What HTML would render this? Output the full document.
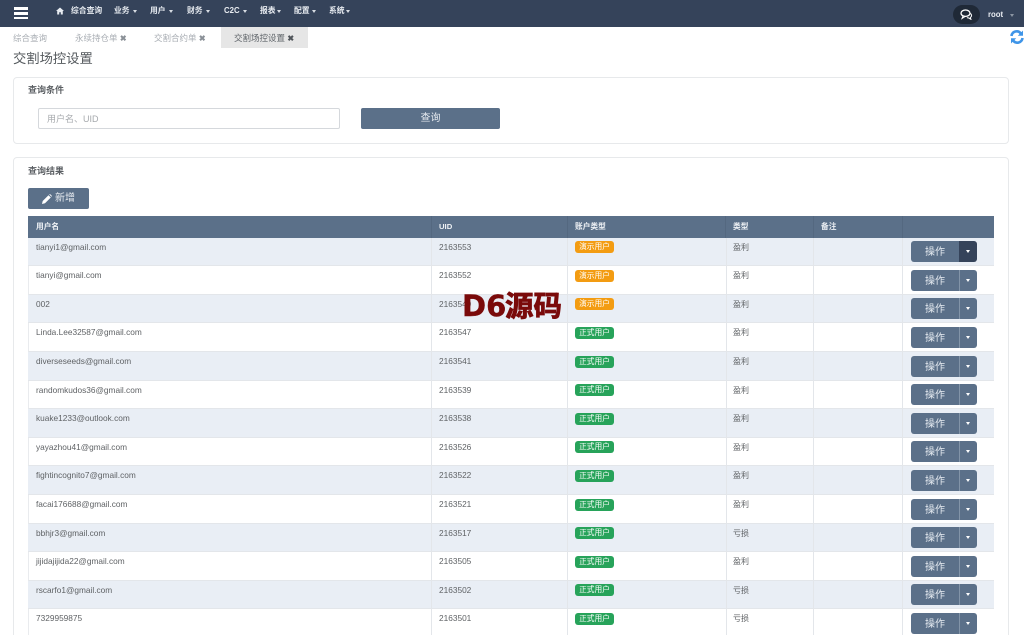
<!DOCTYPE html>
<html lang="zh"><head><meta charset="utf-8"><title>交割场控设置</title>
<style>
*{box-sizing:border-box}
html,body{margin:0;padding:0;width:1024px;height:635px;overflow:hidden;background:#fff;font-family:"Liberation Sans","Noto Sans CJK SC",sans-serif;color:#676a6c}
#p{position:relative;width:1024px;height:635px;overflow:hidden;background:#fff}
.a{position:absolute;white-space:nowrap}
.nav{left:0;top:0;width:1024px;height:27px;background:#35435a}
.n{top:5px;font-size:7.8px;line-height:12px;font-weight:bold;color:#e8ecf1}
.car{position:absolute;width:0;height:0;border-left:2.5px solid transparent;border-right:2.5px solid transparent;border-top:3px solid currentColor}
.tab{top:32px;font-size:8.5px;line-height:13px;color:#a8adb3}
.panel{position:absolute;left:13px;width:996px;background:#fff;border:1px solid #e7e9eb;border-radius:4px}
.h5{font-size:9px;font-weight:bold;color:#5b5f63;line-height:13px}
.th{position:absolute;top:216px;height:22px;font-size:7.7px;line-height:21px;font-weight:bold;color:#eef1f5;background:#5b7089;border-right:1px solid #546880;padding-left:8px}
.row{position:absolute;left:28px;width:966px;height:28.6px;border-bottom:1px solid #e3e6ea}
.row.o{background:#e9eef5}
.row.e{background:#fff;border-left:1px solid #e9ebee}
.c{position:absolute;top:0;bottom:0;border-right:1px solid #e3e6ea}
.t{position:absolute;top:3px;font-size:8.3px;line-height:13px;color:#5f6265;white-space:nowrap}
.t.z{font-size:8px}
.b{position:absolute;left:547px;top:3.5px;width:39px;height:12px;border-radius:3px;color:#fff;font-size:7.7px;line-height:12px;text-align:center}
.w{background:#f39c12}.g{background:#27a35a}
.op{position:absolute;left:883px;top:3.5px;width:48px;height:21px;background:#5b7089;border-radius:3px 0 0 3px;color:#e6ebf1;font-size:10px;line-height:23px;text-align:center}
.dd{position:absolute;left:931px;top:3.5px;width:18px;height:21px;background:#5b7089;border-left:1px solid #8294a8;border-radius:0 3px 3px 0;color:#fff}
.dd.on{background:#35435a;border-left-color:#35435a}
.dd .car{left:5.5px;top:9px}
</style></head><body><div id="p">
<div class="a nav"></div>
<div class="a" style="left:14px;top:7px;width:14px;height:3px;background:#fff"></div>
<div class="a" style="left:14px;top:12px;width:14px;height:2.5px;background:#fff"></div>
<div class="a" style="left:14px;top:16.5px;width:14px;height:2.5px;background:#fff"></div>
<svg class="a" style="left:56px;top:7px" width="8" height="8" viewBox="0 0 8 8"><path d="M4 .5 0 4h1.2v3.5h2V5.2h1.6v2.3h2V4H8z" fill="#e8ecf1"/></svg>
<div class="a n" style="left:71px">综合查询</div>
<div class="a n" style="left:114px">业务</div><span class="car a" style="left:133px;top:10px;color:#d8dde4"></span>
<div class="a n" style="left:150px">用户</div><span class="car a" style="left:169px;top:10px;color:#d8dde4"></span>
<div class="a n" style="left:187px">财务</div><span class="car a" style="left:206px;top:10px;color:#d8dde4"></span>
<div class="a n" style="left:224px">C2C</div><span class="car a" style="left:243px;top:10px;color:#d8dde4"></span>
<div class="a n" style="left:260px">报表</div><span class="car a" style="left:277px;top:10px;color:#d8dde4"></span>
<div class="a n" style="left:294px">配置</div><span class="car a" style="left:312px;top:10px;color:#d8dde4"></span>
<div class="a n" style="left:329px">系统</div><span class="car a" style="left:346px;top:10px;color:#d8dde4"></span>
<div class="a" style="left:953px;top:5px;width:27px;height:19px;border-radius:10px;background:#1f2937"></div>
<svg class="a" style="left:960px;top:9px" width="13" height="11" viewBox="0 0 13 11"><ellipse cx="5.5" cy="4.2" rx="4.5" ry="3.2" fill="none" stroke="#fff" stroke-width="1.3"/><path d="M3 7 2 9.5 5 7.6zM10.5 4.5c1.5 1 1.5 3-.2 4l.6 1.8-2.4-1.4-1.6-.1" fill="none" stroke="#fff" stroke-width="1"/></svg>
<div class="a n" style="left:988px;top:9px">root</div><span class="car a" style="left:1010px;top:14px;color:#8b95a3"></span>

<div class="a" style="left:221px;top:27px;width:87px;height:21px;background:#e6e6e6"></div>
<div class="a tab" style="left:13px">综合查询</div>
<div class="a tab" style="left:75px">永续持仓单 <b style="font-size:8px;color:#8a9097">✖</b></div>
<div class="a tab" style="left:154px">交割合约单 <b style="font-size:8px;color:#8a9097">✖</b></div>
<div class="a tab" style="left:234px;color:#60656a">交割场控设置 <b style="font-size:8px;color:#50555a">✖</b></div>
<svg class="a" style="left:1010px;top:30px" width="14" height="14" viewBox="0 0 14 14"><path d="M1.5 6A5.2 5.2 0 0 1 10.8 3.4M12.5 8A5.2 5.2 0 0 1 3.2 10.6" fill="none" stroke="#3f95e8" stroke-width="2.6"/><path d="M13 .5v5.2H7.8zM1 13.5V8.3H6.2z" fill="#3f95e8"/></svg>
<div class="a" style="left:13px;top:50px;font-size:13.3px;line-height:18px;color:#555a5e">交割场控设置</div>

<div class="panel" style="top:77px;height:67px"></div>
<div class="a h5" style="left:28px;top:84px">查询条件</div>
<div class="a" style="left:38px;top:108px;width:302px;height:21px;border:1px solid #d5d8dc;border-radius:2px;padding-left:8px;font-size:9px;line-height:20px;color:#a6a9ad">用户名、UID</div>
<div class="a" style="left:361px;top:108px;width:139px;height:21px;background:#5b7089;border-radius:2px;color:#e8ecf1;font-size:10px;line-height:22px;text-align:center">查询</div>

<div class="panel" style="top:157px;height:490px"></div>
<div class="a h5" style="left:28px;top:165px">查询结果</div>
<div class="a" style="left:28px;top:188px;width:61px;height:21px;background:#5b7089;border-radius:2px;color:#e8ecf1;font-size:10px;line-height:22px;padding-left:27px">新增</div>
<svg class="a" style="left:42px;top:194px" width="10" height="10" viewBox="0 0 10 10"><path d="M0 10 .7 7 6.5 1.2l2.3 2.3L3 9.3zM7.2.5 8 0l2 2-.5.8z" fill="#fff"/></svg>

<div class="th" style="left:28px;width:404px">用户名</div>
<div class="th" style="left:432px;width:136px;padding-left:7px">UID</div>
<div class="th" style="left:568px;width:158px;padding-left:7px">账户类型</div>
<div class="th" style="left:726px;width:88px;padding-left:7px">类型</div>
<div class="th" style="left:814px;width:89px;padding-left:7px">备注</div>
<div class="th" style="left:903px;width:91px;border-right:0"></div>

<div class="row o" style="top:237.6px"><div class="c" style="left:403px"></div><div class="c" style="left:539px"></div><div class="c" style="left:698px"></div><div class="c" style="left:785px"></div><div class="c" style="left:874px"></div><span class="t" style="left:8px">tianyi1@gmail.com</span><span class="t" style="left:411px">2163553</span><span class="b w">演示用户</span><span class="t z" style="left:705px">盈利</span><span class="op">操作</span><span class="dd on"><i class="car"></i></span></div>
<div class="row e" style="top:266.2px"><div class="c" style="left:402px"></div><div class="c" style="left:538px"></div><div class="c" style="left:697px"></div><div class="c" style="left:784px"></div><div class="c" style="left:873px"></div><span class="t" style="left:7px">tianyi@gmail.com</span><span class="t" style="left:410px">2163552</span><span class="b w" style="left:546px">演示用户</span><span class="t z" style="left:704px">盈利</span><span class="op" style="left:882px">操作</span><span class="dd" style="left:930px"><i class="car"></i></span></div>
<div class="row o" style="top:294.8px"><div class="c" style="left:403px"></div><div class="c" style="left:539px"></div><div class="c" style="left:698px"></div><div class="c" style="left:785px"></div><div class="c" style="left:874px"></div><span class="t" style="left:8px">002</span><span class="t" style="left:411px">2163549</span><span class="b w">演示用户</span><span class="t z" style="left:705px">盈利</span><span class="op">操作</span><span class="dd"><i class="car"></i></span></div>
<div class="row e" style="top:323.4px"><div class="c" style="left:402px"></div><div class="c" style="left:538px"></div><div class="c" style="left:697px"></div><div class="c" style="left:784px"></div><div class="c" style="left:873px"></div><span class="t" style="left:7px">Linda.Lee32587@gmail.com</span><span class="t" style="left:410px">2163547</span><span class="b g" style="left:546px">正式用户</span><span class="t z" style="left:704px">盈利</span><span class="op" style="left:882px">操作</span><span class="dd" style="left:930px"><i class="car"></i></span></div>
<div class="row o" style="top:352px"><div class="c" style="left:403px"></div><div class="c" style="left:539px"></div><div class="c" style="left:698px"></div><div class="c" style="left:785px"></div><div class="c" style="left:874px"></div><span class="t" style="left:8px">diverseseeds@gmail.com</span><span class="t" style="left:411px">2163541</span><span class="b g">正式用户</span><span class="t z" style="left:705px">盈利</span><span class="op">操作</span><span class="dd"><i class="car"></i></span></div>
<div class="row e" style="top:380.6px"><div class="c" style="left:402px"></div><div class="c" style="left:538px"></div><div class="c" style="left:697px"></div><div class="c" style="left:784px"></div><div class="c" style="left:873px"></div><span class="t" style="left:7px">randomkudos36@gmail.com</span><span class="t" style="left:410px">2163539</span><span class="b g" style="left:546px">正式用户</span><span class="t z" style="left:704px">盈利</span><span class="op" style="left:882px">操作</span><span class="dd" style="left:930px"><i class="car"></i></span></div>
<div class="row o" style="top:409.2px"><div class="c" style="left:403px"></div><div class="c" style="left:539px"></div><div class="c" style="left:698px"></div><div class="c" style="left:785px"></div><div class="c" style="left:874px"></div><span class="t" style="left:8px">kuake1233@outlook.com</span><span class="t" style="left:411px">2163538</span><span class="b g">正式用户</span><span class="t z" style="left:705px">盈利</span><span class="op">操作</span><span class="dd"><i class="car"></i></span></div>
<div class="row e" style="top:437.8px"><div class="c" style="left:402px"></div><div class="c" style="left:538px"></div><div class="c" style="left:697px"></div><div class="c" style="left:784px"></div><div class="c" style="left:873px"></div><span class="t" style="left:7px">yayazhou41@gmail.com</span><span class="t" style="left:410px">2163526</span><span class="b g" style="left:546px">正式用户</span><span class="t z" style="left:704px">盈利</span><span class="op" style="left:882px">操作</span><span class="dd" style="left:930px"><i class="car"></i></span></div>
<div class="row o" style="top:466.4px"><div class="c" style="left:403px"></div><div class="c" style="left:539px"></div><div class="c" style="left:698px"></div><div class="c" style="left:785px"></div><div class="c" style="left:874px"></div><span class="t" style="left:8px">fightincognito7@gmail.com</span><span class="t" style="left:411px">2163522</span><span class="b g">正式用户</span><span class="t z" style="left:705px">盈利</span><span class="op">操作</span><span class="dd"><i class="car"></i></span></div>
<div class="row e" style="top:495px"><div class="c" style="left:402px"></div><div class="c" style="left:538px"></div><div class="c" style="left:697px"></div><div class="c" style="left:784px"></div><div class="c" style="left:873px"></div><span class="t" style="left:7px">facai176688@gmail.com</span><span class="t" style="left:410px">2163521</span><span class="b g" style="left:546px">正式用户</span><span class="t z" style="left:704px">盈利</span><span class="op" style="left:882px">操作</span><span class="dd" style="left:930px"><i class="car"></i></span></div>
<div class="row o" style="top:523.6px"><div class="c" style="left:403px"></div><div class="c" style="left:539px"></div><div class="c" style="left:698px"></div><div class="c" style="left:785px"></div><div class="c" style="left:874px"></div><span class="t" style="left:8px">bbhjr3@gmail.com</span><span class="t" style="left:411px">2163517</span><span class="b g">正式用户</span><span class="t z" style="left:705px">亏损</span><span class="op">操作</span><span class="dd"><i class="car"></i></span></div>
<div class="row e" style="top:552.2px"><div class="c" style="left:402px"></div><div class="c" style="left:538px"></div><div class="c" style="left:697px"></div><div class="c" style="left:784px"></div><div class="c" style="left:873px"></div><span class="t" style="left:7px">jijidajijida22@gmail.com</span><span class="t" style="left:410px">2163505</span><span class="b g" style="left:546px">正式用户</span><span class="t z" style="left:704px">盈利</span><span class="op" style="left:882px">操作</span><span class="dd" style="left:930px"><i class="car"></i></span></div>
<div class="row o" style="top:580.8px"><div class="c" style="left:403px"></div><div class="c" style="left:539px"></div><div class="c" style="left:698px"></div><div class="c" style="left:785px"></div><div class="c" style="left:874px"></div><span class="t" style="left:8px">rscarfo1@gmail.com</span><span class="t" style="left:411px">2163502</span><span class="b g">正式用户</span><span class="t z" style="left:705px">亏损</span><span class="op">操作</span><span class="dd"><i class="car"></i></span></div>
<div class="row e" style="top:609.4px"><div class="c" style="left:402px"></div><div class="c" style="left:538px"></div><div class="c" style="left:697px"></div><div class="c" style="left:784px"></div><div class="c" style="left:873px"></div><span class="t" style="left:7px">7329959875</span><span class="t" style="left:410px">2163501</span><span class="b g" style="left:546px">正式用户</span><span class="t z" style="left:704px">亏损</span><span class="op" style="left:882px">操作</span><span class="dd" style="left:930px"><i class="car"></i></span></div>

<div class="a" style="left:462px;top:291px;font-family:'DejaVu Sans',sans-serif;font-size:29px;line-height:30px;font-weight:bold;color:#7a0a0a;-webkit-text-stroke:.4px #7a0a0a">D6</div>
<div class="a" style="left:505px;top:290px;font-family:'Noto Sans CJK SC',sans-serif;font-size:28.5px;line-height:30px;font-weight:bold;color:#7a0a0a;-webkit-text-stroke:.8px #7a0a0a">源码</div>
</div></body></html>
